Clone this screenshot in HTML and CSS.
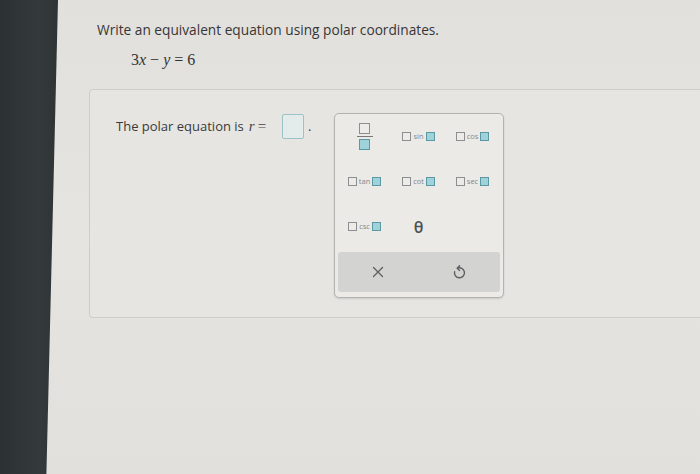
FILE: index.html
```html
<!DOCTYPE html>
<html>
<head>
<meta charset="utf-8">
<link rel="stylesheet" href="styles.css">
</head>
<body>
<div class="side"></div>
<div class="main">
  <p class="prompt">Write an equivalent equation using polar coordinates.</p>
  <p class="given"><span>3</span><i>x</i><span class="op">−</span><i>y</i><span class="op">=</span><span>6</span></p>
  <div class="card">
    <div class="answer">
      <span class="label">The polar equation is</span>
      <span class="math"><i>r</i><span class="eq">=</span></span>
      <span class="input"></span>
      <span class="dot">.</span>
    </div>
    <div class="palette">
      <div class="keys">
        <div class="key"><span class="frac"><span class="sq"></span><span class="bar"></span><span class="sq teal"></span></span></div>
        <div class="key"><span class="fn"><span class="sq"></span><span class="name">sin</span><span class="sq teal"></span></span></div>
        <div class="key"><span class="fn"><span class="sq"></span><span class="name">cos</span><span class="sq teal"></span></span></div>
        <div class="key"><span class="fn"><span class="sq"></span><span class="name">tan</span><span class="sq teal"></span></span></div>
        <div class="key"><span class="fn"><span class="sq"></span><span class="name">cot</span><span class="sq teal"></span></span></div>
        <div class="key"><span class="fn"><span class="sq"></span><span class="name">sec</span><span class="sq teal"></span></span></div>
        <div class="key"><span class="fn"><span class="sq"></span><span class="name">csc</span><span class="sq teal"></span></span></div>
        <div class="key"><span class="theta">θ</span></div>
      </div>
      <div class="actions">
        <div class="act">
          <svg width="14" height="14" viewBox="0 0 14 14"><path d="M2.5 2.5 L11.5 11.5 M11.5 2.5 L2.5 11.5" stroke="#5b5f63" stroke-width="1.3" fill="none" stroke-linecap="round"/></svg>
        </div>
        <div class="act">
          <svg width="14" height="16" viewBox="0 0 14 16"><path d="M5.5 4.2 A5 5 0 1 1 2.6 7.6" stroke="#5b5f63" stroke-width="1.4" fill="none" stroke-linecap="round"/><path d="M7.6 1.8 L5.2 4.2 L7.6 6.4" stroke="#5b5f63" stroke-width="1.4" fill="none" stroke-linecap="round" stroke-linejoin="round"/></svg>
        </div>
      </div>
    </div>
  </div>
</div>
</body>
</html>
```
FILE: styles.css
```css
html, body {
  margin: 0;
  padding: 0;
}
body {
  width: 700px;
  height: 474px;
  overflow: hidden;
  display: flex;
  background: #e3e1de;
  font-family: "Open Sans", "Liberation Sans", sans-serif;
  color: #3a3a3a;
}
.side {
  width: 58px;
  flex: none;
  background: linear-gradient(90deg, #2c3133 0%, #343a3c 70%, #2e3335 100%);
  clip-path: polygon(0 0, 100% 0, 80% 100%, 0 100%);
}
.main {
  flex: 1;
  min-width: 0;
  background: linear-gradient(180deg, #e2e0dd 0%, #e6e4e1 50%, #e2e0dc 100%);
  margin-left: -12px;
  padding-left: 51px;
}
.prompt {
  margin: 0;
  padding-top: 21px;
  font-size: 13.7px;
  line-height: 18px;
  color: #363636;
}
.given {
  margin: 0;
  padding-top: 12px;
  padding-left: 34px;
  font-family: "Liberation Serif", "Times New Roman", serif;
  font-size: 16px;
  line-height: 18px;
  color: #333;
}
.given .op {
  margin: 0 4px;
}
.card {
  margin-top: 20px;
  margin-left: -8px;
  margin-right: -20px;
  height: 229px;
  box-sizing: border-box;
  border: 1px solid #cfcdca;
  border-radius: 4px;
  background: #e6e5e2;
  padding: 23px 0 0 26px;
  display: flex;
  align-items: flex-start;
}
.answer {
  display: flex;
  align-items: center;
  height: 26px;
  font-size: 13px;
  color: #3a3a3a;
}
.math {
  margin-left: 5px;
  font-family: "Liberation Serif", "Times New Roman", serif;
  font-size: 15px;
  color: #444;
}
.math .eq {
  margin-left: 3px;
}
.input {
  margin-left: 16px;
  width: 20px;
  height: 23px;
  border: 1px solid #9cc2c6;
  border-radius: 2px;
  background: #e3ecea;
}
.dot {
  margin-left: 4px;
  font-size: 13px;
  line-height: 26px;
}
.palette {
  margin-left: 22px;
  width: 170px;
  height: 185px;
  box-sizing: border-box;
  border: 1px solid #b4b3b1;
  border-radius: 5px;
  background: #eceae7;
  box-shadow: 0 1px 2px rgba(0,0,0,0.12);
  padding: 0 3px 4px;
  display: flex;
  flex-direction: column;
}
.keys {
  display: grid;
  grid-template-columns: repeat(3, 54px);
  grid-auto-rows: 45px;
  height: 137px;
}
.key {
  display: flex;
  align-items: center;
  justify-content: center;
}
.sq {
  display: block;
  width: 7px;
  height: 7px;
  border: 1px solid #8c8e90;
  background: #ecebe8;
}
.sq.teal {
  border-color: #5a98a3;
  background: #9fd3d9;
}
.frac {
  display: flex;
  flex-direction: column;
  align-items: center;
  gap: 2px;
}
.frac .sq {
  width: 9px;
  height: 9px;
}
.frac .bar {
  display: block;
  width: 16px;
  height: 1px;
  background: #777;
}
.fn {
  display: flex;
  align-items: center;
  gap: 2px;
}
.fn .name {
  font-size: 7.5px;
  color: #85888a;
  line-height: 9px;
}
.theta {
  font-size: 16px;
  font-weight: 600;
  color: #4c5257;
  font-family: "Open Sans", sans-serif;
}
.actions {
  margin-top: 1px;
  height: 40px;
  display: flex;
  background: #d3d3d1;
  border-radius: 3px;
}
.act {
  flex: 1;
  display: flex;
  align-items: center;
  justify-content: center;
}
```
